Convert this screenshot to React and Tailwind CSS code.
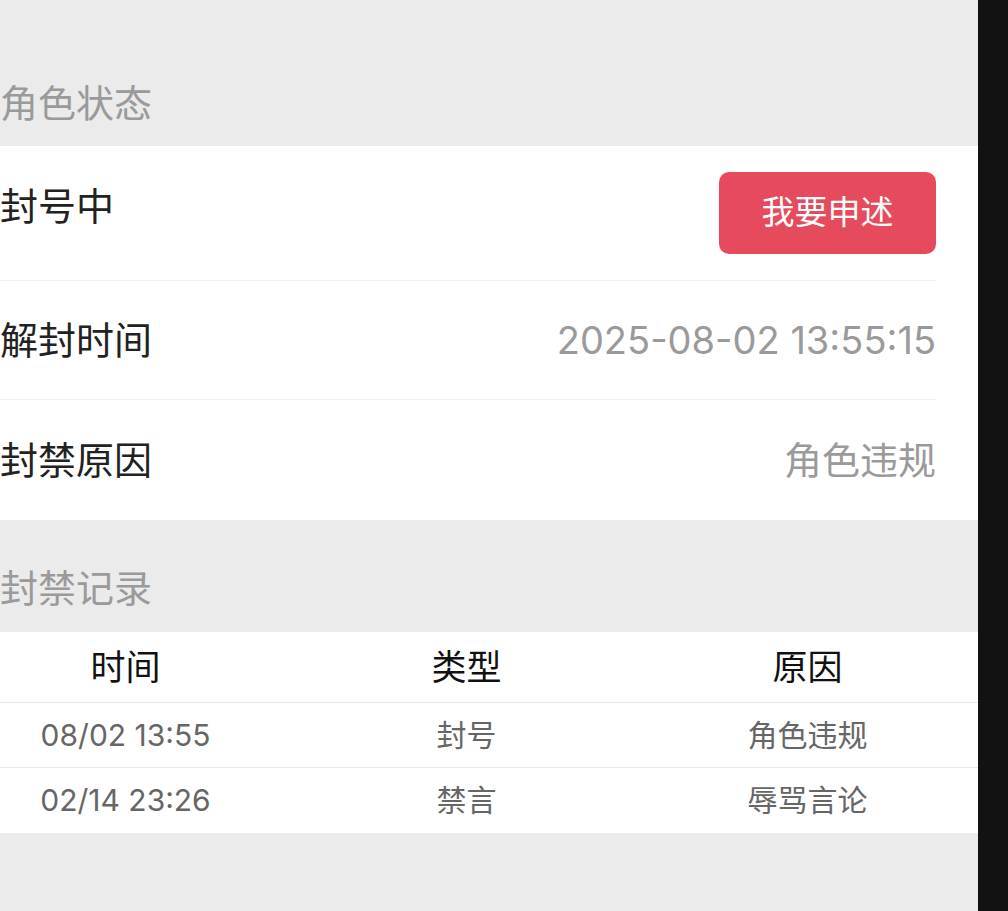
import React from 'react';

const font = { fontFamily: 'Inter, "Noto Sans CJK SC", sans-serif' };

const infoRows = [
  { label: '解封时间', value: '2025-08-02 13:55:15' },
  { label: '封禁原因', value: '角色违规' }
];

const records = [
  { time: '08/02 13:55', type: '封号', reason: '角色违规' },
  { time: '02/14 23:26', type: '禁言', reason: '辱骂言论' }
];

const App = () => {
  return (
    <div className="flex min-h-[911px] w-full" style={font}>
      <div className="w-[978px] overflow-hidden bg-[#ebebeb]">
        <div className="ml-[-45px] w-[1023px] pb-[78px]">
          <div className="h-[146px] pl-[45px] pr-[42px] pt-[80px] text-[38px] leading-[46px] text-[#9a9a9a]">
            角色状态
          </div>

          <div className="bg-white pl-[45px] pr-[42px]">
            <div className="flex items-start justify-between border-b border-[#f1f1f1] pt-[26px] pb-[26px]">
              <span className="mt-[11px] text-[38px] leading-[46px] text-[#222]">封号中</span>
              <button className="flex h-[82px] w-[217px] items-center justify-center rounded-[10px] bg-[#e64b5d] text-[33px] text-white">
                我要申述
              </button>
            </div>
            {infoRows.map((row, i) => (
              <div
                key={row.label}
                className={
                  'flex items-center justify-between text-[38px] leading-[46px] ' +
                  (i === 0 ? 'h-[119px] border-b border-[#f1f1f1]' : 'h-[120px]')
                }
              >
                <span className="text-[#222]">{row.label}</span>
                <span className="text-[#9a9a9a]">{row.value}</span>
              </div>
            ))}
          </div>

          <div className="h-[112px] pl-[45px] pr-[42px] pt-[45px] text-[38px] leading-[46px] text-[#9a9a9a]">
            封禁记录
          </div>

          <div className="bg-white">
            <div className="grid h-[71px] grid-cols-3 items-center border-b border-[#e9e9e9] text-center text-[35px] text-[#111]">
              <span>时间</span>
              <span>类型</span>
              <span>原因</span>
            </div>
            {records.map((r, i) => (
              <div
                key={r.time}
                className={
                  'grid h-[65px] grid-cols-3 items-center text-center text-[30px] text-[#666] ' +
                  (i === 0 ? 'border-b border-[#e9e9e9]' : '')
                }
              >
                <span>{r.time}</span>
                <span>{r.type}</span>
                <span>{r.reason}</span>
              </div>
            ))}
          </div>
        </div>
      </div>
      <div className="flex-1 bg-[#121212]" />
    </div>
  );
};

export default App;
